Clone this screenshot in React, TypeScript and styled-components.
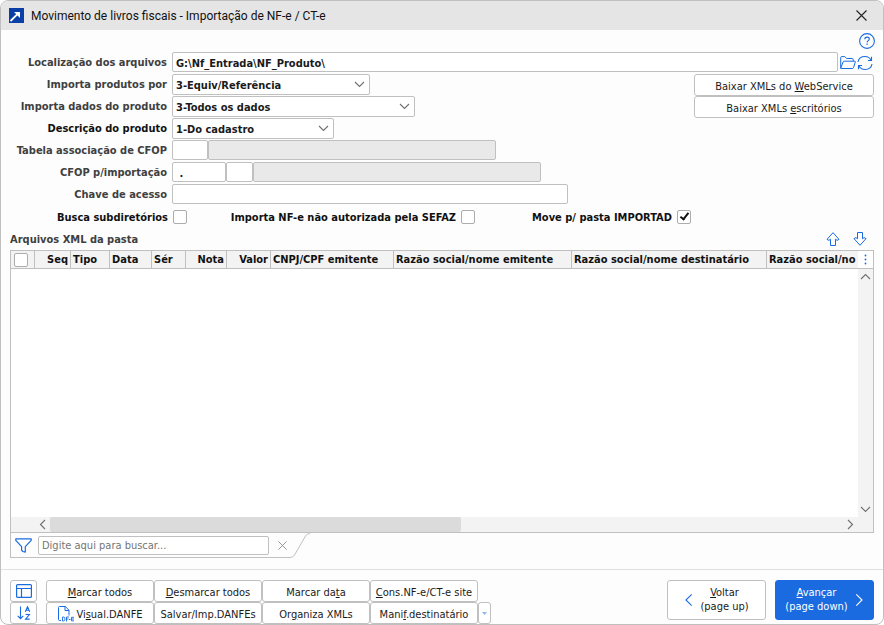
import React from "react";
import styled, { createGlobalStyle, css } from "styled-components";

const line = "#c0c0c0";
const blue = "#1a6be0";

const GlobalStyle = createGlobalStyle`
  *, *::before, *::after { box-sizing: border-box; }
  body {
    margin: 0;
    background: #ffffff;
    color: #1a1a1a;
    font-family: "DejaVu Sans Condensed", "DejaVu Sans", sans-serif;
    font-size: 11px;
    font-stretch: condensed;
  }
  button, input, select { font: inherit; color: inherit; margin: 0; }
`;

const Window = styled.main`
  display: flex;
  flex-direction: column;
  min-height: 100vh;
  border: 1px solid ${line};
  border-radius: 8px;
  background: #fdfdfd;
  overflow: hidden;
`;

const TitleBar = styled.header`
  display: flex;
  align-items: center;
  height: 29px;
  padding: 0 16px 0 8px;
  gap: 7px;
  background: #e5e5e5;
`;

const Title = styled.h1`
  flex: 1;
  margin: 0;
  font-family: Roboto, "Noto Sans", sans-serif;
  font-size: 12px;
  font-weight: 400;
  font-stretch: normal;
  color: #111111;
`;

const IconButton = styled.button`
  display: inline-flex;
  align-items: center;
  justify-content: center;
  padding: 0;
  border: 0;
  background: none;
  color: ${blue};
`;

const HelpBar = styled.div`
  display: flex;
  justify-content: flex-end;
  align-items: flex-start;
  height: 22px;
  padding: 3px 8px 0 0;
`;

const Form = styled.form`
  padding: 0 9px;
`;

const FormColumns = styled.div`
  display: flex;
  align-items: flex-start;
`;

const Fields = styled.div`
  flex: 1;
  min-width: 0;
`;

const FieldRow = styled.div`
  display: flex;
  align-items: flex-start;
  height: 22px;
`;

const FieldLabel = styled.label<{ $strong?: boolean }>`
  flex: none;
  width: 157px;
  margin-right: 5px;
  line-height: 22px;
  text-align: right;
  font-weight: 700;
  white-space: nowrap;
  color: ${(p) => (p.$strong ? "#111111" : "#404040")};
`;

const box = css`
  height: 20px;
  border: 1px solid ${line};
  border-radius: 2px;
  background: #ffffff;
  outline: 0;
`;

const TextBox = styled.input<{ $width?: number }>`
  ${box}
  ${(p) => (p.$width ? `width: ${p.$width}px;` : "flex: 1;")}
  min-width: 0;
  padding: 2px 3px 0;
  font-weight: 700;
  &:read-only { background: #e9e9e9; }
`;

const SelectWrap = styled.div<{ $width: number }>`
  position: relative;
  width: ${(p) => p.$width}px;
  svg { position: absolute; right: 5px; top: 7px; pointer-events: none; }
`;

const Select = styled.select`
  ${box}
  display: block;
  width: 100%;
  height: 21px;
  padding: 1px 3px 0;
  appearance: none;
  font-weight: 700;
`;

const RowIcons = styled.div`
  display: flex;
  align-items: center;
  gap: 1px;
  height: 22px;
  margin: 0 1px 0 2px;
`;

const PushButton = styled.button<{ $width?: number }>`
  display: flex;
  align-items: center;
  justify-content: center;
  gap: 2px;
  height: 22px;
  padding: 2px 0 0;
  ${(p) => p.$width && `width: ${p.$width}px;`}
  border: 1px solid ${line};
  border-radius: 3px;
  background: #ffffff;
  white-space: nowrap;
  u { text-underline-offset: 1px; }
`;

const ToolButton = styled(PushButton)`
  padding: 0;
  color: ${blue};
`;

const SideButtons = styled.div`
  display: flex;
  flex-direction: column;
`;

const Checks = styled.div`
  display: flex;
  height: 22px;
`;

const CheckItem = styled.div<{ $width: number }>`
  display: flex;
  align-items: center;
  justify-content: flex-end;
  gap: 5px;
  width: ${(p) => p.$width}px;
  font-weight: 700;
  white-space: nowrap;
  color: #111111;
`;

const CheckBox = styled.input.attrs({ type: "checkbox" })`
  appearance: none;
  flex: none;
  display: block;
  width: 14px;
  height: 14px;
  border: 1px solid #adadad;
  border-radius: 2px;
  background: #ffffff;
  &:checked::before {
    content: "";
    display: block;
    width: 5px;
    height: 9px;
    margin: 0 0 0 4px;
    border: solid #111111;
    border-width: 0 2px 2px 0;
    transform: rotate(38deg);
  }
`;

const ListHeading = styled.div`
  display: flex;
  align-items: center;
  justify-content: space-between;
  height: 22px;
  padding: 0 16px 0 9px;
`;

const ListTitle = styled.h2`
  margin: 0;
  font-size: 11px;
  font-weight: 700;
  color: #404040;
`;

const MoveButtons = styled.div`
  display: flex;
  gap: 13px;
`;

const Grid = styled.section`
  flex: 1;
  display: grid;
  grid-template-columns: minmax(0, 1fr) 15px;
  grid-template-rows: 18px minmax(80px, 1fr) 15px;
  margin: 0 9px;
  border: 1px solid ${line};
  background: #ffffff;
`;

const TableView = styled.div`
  grid-row: 1 / 3;
  overflow: hidden;
`;

const Table = styled.table`
  width: 100%;
  table-layout: fixed;
  border-collapse: separate;
  border-spacing: 0;
`;

const HeadCell = styled.th<{ $width?: number; $right?: boolean }>`
  ${(p) => p.$width && `width: ${p.$width}px; border-right: 1px solid ${line};`}
  height: 18px;
  padding: 0 2px;
  border-bottom: 1px solid ${line};
  background: #f3f3f3;
  line-height: 16px;
  text-align: ${(p) => (p.$right ? "right" : "left")};
  white-space: nowrap;
  color: #111111;
  ${CheckBox} { margin-left: 1px; }
`;

const ColumnMenu = styled(IconButton)`
  border-bottom: 1px solid ${line};
`;

const VScroll = styled.div`
  display: flex;
  flex-direction: column;
  align-items: center;
  justify-content: space-between;
  padding: 4px 0;
  background: #f3f3f3;
`;

const HScroll = styled.div`
  grid-column: 1 / 3;
  display: flex;
  align-items: center;
  padding: 0 19px 0 28px;
  background: #f3f3f3;
`;

const Track = styled.div`
  flex: 1;
  height: 15px;
  margin: 0 6px 0 4px;
`;

const Thumb = styled.div`
  width: 52%;
  height: 15px;
  border-radius: 2px;
  background: #dbdbdb;
`;

const Search = styled.div`
  display: flex;
  height: 25px;
  margin: 0 9px 11px;
`;

const SearchBody = styled.div`
  display: flex;
  align-items: center;
  padding: 0 3px 0 4px;
  border-left: 1px solid ${line};
  border-bottom: 1px solid ${line};
`;

const SearchBox = styled.input`
  ${box}
  width: 231px;
  height: 19px;
  margin: 0 9px 0 6px;
  padding: 0 3px;
  &::placeholder { color: #757575; opacity: 1; }
`;

const Footer = styled.footer`
  display: flex;
  align-items: flex-start;
  padding: 10px 9px 0;
  border-top: 1px solid #e0e0e0;
`;

const ToolColumn = styled.div`
  display: flex;
  flex-direction: column;
  margin-right: 9px;
`;

const Actions = styled.div`
  flex: 1;
`;

const ActionRow = styled.div`
  display: flex;
`;

const NavButton = styled.button<{ $primary?: boolean }>`
  display: flex;
  align-items: center;
  justify-content: center;
  gap: 7px;
  width: 99px;
  height: 40px;
  margin-left: 9px;
  padding: 0;
  border: 1px solid ${(p) => (p.$primary ? blue : line)};
  border-radius: 3px;
  background: ${(p) => (p.$primary ? blue : "#ffffff")};
  color: ${(p) => (p.$primary ? "#ffffff" : "#1a1a1a")};
  line-height: 14px;
  white-space: nowrap;
  u { text-underline-offset: 1px; }
`;

type Direction = "up" | "down" | "left" | "right";
const chevrons: Record<Direction, [number, number, string]> = {
  down: [11, 7, "M1 1 5.5 5.5 10 1"],
  up: [11, 7, "M1 6 5.5 1.5 10 6"],
  left: [7, 11, "M6 1 1.5 5.5 6 10"],
  right: [7, 11, "M1 1 5.5 5.5 1 10"],
};

const Chevron = ({ to, color = "#707070", scale = 1 }: { to: Direction; color?: string; scale?: number }) => {
  const [w, h, d] = chevrons[to];
  return (
    <svg width={Math.round(w * scale)} height={Math.round(h * scale)} viewBox={`0 0 ${w} ${h}`} fill="none" stroke={color} strokeWidth={1.1 / scale}>
      <path d={d} />
    </svg>
  );
};

const LogoIcon = () => (
  <svg width="15" height="15" viewBox="0 0 15 15">
    <rect width="15" height="15" fill="#0a3fa8" />
    <path d="M1.500 13 9 5.700" fill="none" stroke="#fff" strokeWidth="1.800" />
    <path d="M5 4h6v6Z" fill="#fff" />
  </svg>
);

const CloseIcon = ({ size, color }: { size: number; color: string }) => (
  <svg width={size} height={size} viewBox="0 0 11 11" stroke={color} strokeWidth="1.1">
    <path d="M.5.5l10 10M10.5.5l-10 10" />
  </svg>
);

const HelpIcon = () => (
  <svg width="16" height="16" viewBox="0 0 16 16" fill="none" stroke="currentColor" strokeWidth="1.1">
    <circle cx="8" cy="8" r="7.4" />
    <path d="M5.8 6.2c0-1.4 1-2.1 2.3-2.1s2.2.8 2.2 1.9c0 1.6-2.2 1.7-2.2 3.4M8.1 10.6v1.4" />
  </svg>
);

const FolderIcon = () => (
  <svg width="16" height="14" viewBox="0 0 16 14" fill="none" stroke="currentColor" strokeLinejoin="round">
    <path d="M.7 12.3V1.6q0-1 1-1h3.2l1.7 1.9h5.6q1 0 1 1v1.7M.7 12.3l2.4-6.4q.2-.7 1-.7h10.700q.7 0 .5.7l-1.800 5.700q-.2.9-1.200.9H1.200q-.6 0-.5-.2Z" />
  </svg>
);

const RefreshIcon = () => (
  <svg width="16" height="16" viewBox="0 0 16 16" fill="none" stroke="currentColor" strokeWidth="1.1">
    <path d="M1 7C1.600 3.500 4.500 1.500 8 1.500c2.600 0 4.800 1.300 6 3.500M14.500 1.800v3.700H11M15 9c-.6 3.500-3.500 5.500-7 5.500-2.600 0-4.800-1.300-6-3.500M1.500 14.200v-3.700H5" />
  </svg>
);

const ArrowIcon = ({ down }: { down?: boolean }) => (
  <svg width="14" height="14" viewBox="0 0 14 14" fill="none" stroke="currentColor" strokeLinejoin="round">
    <path
      d={
        down
          ? "M4.500.500h5v6.300l1.600-1.200 1.900 1L7 13.300l-6-6.700 1.900-1 1.600 1.200Z"
          : "M4.500 13.500h5V7.200l1.600 1.200 1.900-1L7 .700l-6 6.700 1.900 1 1.600-1.200Z"
      }
    />
  </svg>
);

const DotsIcon = () => (
  <svg width="3" height="11" viewBox="0 0 3 11" fill="currentColor">
    <circle cx="1.500" cy="1.500" r=".9" />
    <circle cx="1.500" cy="5.500" r=".9" />
    <circle cx="1.500" cy="9.500" r=".9" />
  </svg>
);

const FunnelIcon = () => (
  <svg width="17" height="15" viewBox="0 0 17 15" fill="none" stroke={blue} strokeWidth="1.200" strokeLinejoin="round">
    <path d="M.800.800h15.400v1.600L10.300 8.600v5.500l-2.400-.6-1.300-1.200V8.600L.800 2.400Z" />
  </svg>
);

const LayoutIcon = () => (
  <svg width="16" height="14" viewBox="0 0 16 14" fill="none" stroke="currentColor" strokeWidth="1.200">
    <rect x=".600" y=".600" width="14.800" height="12.800" rx="1" />
    <path d="M.600 4.500h14.800M5.500 4.500v8.900" />
  </svg>
);

const SortIcon = () => (
  <svg width="14" height="14" viewBox="0 0 14 14" fill="none" stroke="currentColor" strokeWidth="1.100">
    <path d="M3.500.500v12M.700 9.800l2.800 2.800 2.800-2.800M8.300 5.700 10.500.700l2.200 5M9 4.200h3M8.600 8.500h3.800l-3.900 4.600h4.200" />
  </svg>
);

const DocIcon = () => (
  <svg width="17" height="16" viewBox="0 0 17 16" fill="none" stroke={blue}>
    <path d="M4 14.500H2.500q-1 0-1-1v-12q0-1 1-1h5.800l3.700 3.700v5.300M8 .700v3.800h4" />
    <path d="M5.500 11v4M5.500 11h1q1.500 0 1.500 2t-1.500 2h-1M9.500 15.500V11H12M9.500 13h2M12 13.500h1.500M17 11.300h-2.500v3.500H17M14.500 13H17" strokeWidth=".9" />
  </svg>
);

const SlantEdge = () => (
  <svg width="20" height="25" viewBox="0 0 20 25" fill="none" stroke={line}>
    <path d="M0 24.500Q3 24.500 4.500 22L15.500 3Q17 .500 20 .500" />
  </svg>
);

const DropdownIcon = () => (
  <svg width="5" height="3" viewBox="0 0 5 3" fill="#8db8f5">
    <path d="M0 0h5L2.500 3Z" />
  </svg>
);

const columns: { name: string; width?: number; right?: boolean }[] = [
  { name: "Seq", width: 36, right: true },
  { name: "Tipo", width: 39 },
  { name: "Data", width: 42 },
  { name: "Sér", width: 34 },
  { name: "Nota", width: 41, right: true },
  { name: "Valor", width: 44, right: true },
  { name: "CNPJ/CPF emitente", width: 123 },
  { name: "Razão social/nome emitente", width: 178 },
  { name: "Razão social/nome destinatário", width: 195 },
  { name: "Razão social/no" },
];

const SelectField = ({ id, label, value, width, strong }: { id: string; label: string; value: string; width: number; strong?: boolean }) => (
  <FieldRow>
    <FieldLabel htmlFor={id} $strong={strong}>{label}</FieldLabel>
    <SelectWrap $width={width}>
      <Select id={id}>
        <option>{value}</option>
      </Select>
      <Chevron to="down" />
    </SelectWrap>
  </FieldRow>
);

export default function App() {
  return (
    <>
      <GlobalStyle />
      <Window>
        <TitleBar>
          <LogoIcon />
          <Title>Movimento de livros fiscais - Importação de NF-e / CT-e</Title>
          <IconButton aria-label="Fechar"><CloseIcon size={11} color="#222" /></IconButton>
        </TitleBar>
        <HelpBar>
          <IconButton aria-label="Ajuda"><HelpIcon /></IconButton>
        </HelpBar>
        <Form onSubmit={(e) => e.preventDefault()}>
          <FieldRow>
            <FieldLabel htmlFor="path">Localização dos arquivos</FieldLabel>
            <TextBox id="path" defaultValue={"G:\\Nf_Entrada\\NF_Produto\\"} />
            <RowIcons>
              <IconButton type="button" aria-label="Abrir pasta"><FolderIcon /></IconButton>
              <IconButton type="button" aria-label="Atualizar"><RefreshIcon /></IconButton>
            </RowIcons>
          </FieldRow>
          <FormColumns>
            <Fields>
              <SelectField id="by" label="Importa produtos por" value="3-Equiv/Referência" width={198} />
              <SelectField id="data" label="Importa dados do produto" value="3-Todos os dados" width={243} />
              <SelectField id="desc" label="Descrição do produto" value="1-Do cadastro" width={162} strong />
              <FieldRow>
                <FieldLabel htmlFor="table">Tabela associação de CFOP</FieldLabel>
                <TextBox id="table" $width={36} />
                <TextBox aria-label="Descrição da tabela" $width={288} readOnly />
              </FieldRow>
              <FieldRow>
                <FieldLabel htmlFor="cfop">CFOP p/importação</FieldLabel>
                <TextBox id="cfop" $width={54} defaultValue=" ." />
                <TextBox aria-label="Complemento do CFOP" $width={27} />
                <TextBox aria-label="Descrição do CFOP" $width={288} readOnly />
              </FieldRow>
              <FieldRow>
                <FieldLabel htmlFor="key">Chave de acesso</FieldLabel>
                <TextBox id="key" $width={396} />
              </FieldRow>
            </Fields>
            <SideButtons>
              <PushButton type="button" $width={180}><span>Baixar XMLs do <u>W</u>ebService</span></PushButton>
              <PushButton type="button" $width={180}><span>Baixar XMLs <u>e</u>scritórios</span></PushButton>
            </SideButtons>
          </FormColumns>
          <Checks>
            <CheckItem $width={177}>
              <label htmlFor="sub">Busca subdiretórios</label>
              <CheckBox id="sub" />
            </CheckItem>
            <CheckItem $width={288}>
              <label htmlFor="sefaz">Importa NF-e não autorizada pela SEFAZ</label>
              <CheckBox id="sefaz" />
            </CheckItem>
            <CheckItem $width={216}>
              <label htmlFor="move">Move p/ pasta IMPORTAD</label>
              <CheckBox id="move" defaultChecked />
            </CheckItem>
          </Checks>
        </Form>
        <ListHeading>
          <ListTitle>Arquivos XML da pasta</ListTitle>
          <MoveButtons>
            <IconButton aria-label="Mover para cima"><ArrowIcon /></IconButton>
            <IconButton aria-label="Mover para baixo"><ArrowIcon down /></IconButton>
          </MoveButtons>
        </ListHeading>
        <Grid>
          <TableView>
            <Table>
              <thead>
                <tr>
                  <HeadCell $width={24}><CheckBox aria-label="Selecionar todos" /></HeadCell>
                  {columns.map((c, i) => (
                    <HeadCell key={i} $width={c.width} $right={c.right}>{c.name}</HeadCell>
                  ))}
                </tr>
              </thead>
            </Table>
          </TableView>
          <ColumnMenu aria-label="Colunas"><DotsIcon /></ColumnMenu>
          <VScroll>
            <Chevron to="up" />
            <Chevron to="down" />
          </VScroll>
          <HScroll>
            <Chevron to="left" />
            <Track><Thumb /></Track>
            <Chevron to="right" />
          </HScroll>
        </Grid>
        <Search>
          <SearchBody>
            <FunnelIcon />
            <SearchBox aria-label="Buscar" placeholder="Digite aqui para buscar..." />
            <IconButton aria-label="Limpar busca"><CloseIcon size={9} color="#8a8a8a" /></IconButton>
          </SearchBody>
          <SlantEdge />
        </Search>
        <Footer>
          <ToolColumn>
            <ToolButton $width={27} aria-label="Layout"><LayoutIcon /></ToolButton>
            <ToolButton $width={27} aria-label="Ordenar"><SortIcon /></ToolButton>
          </ToolColumn>
          <Actions>
            <ActionRow>
              <PushButton $width={108}><span><u>M</u>arcar todos</span></PushButton>
              <PushButton $width={108}><span><u>D</u>esmarcar todos</span></PushButton>
              <PushButton $width={108}><span>Marcar da<u>t</u>a</span></PushButton>
              <PushButton $width={108}><span><u>C</u>ons.NF-e/CT-e site</span></PushButton>
            </ActionRow>
            <ActionRow>
              <PushButton $width={108}><DocIcon /><span>Vi<u>s</u>ual.DANFE</span></PushButton>
              <PushButton $width={108}><span>Salvar/Imp.DANFEs</span></PushButton>
              <PushButton $width={108}><span>Or<u>g</u>aniza XMLs</span></PushButton>
              <PushButton $width={108}><span>Mani<u>f</u>.destinatário</span></PushButton>
              <ToolButton $width={13} aria-label="Mais opções"><DropdownIcon /></ToolButton>
            </ActionRow>
          </Actions>
          <NavButton>
            <Chevron to="left" color={blue} scale={1.3} />
            <span><u>V</u>oltar<br />(page up)</span>
          </NavButton>
          <NavButton $primary>
            <span><u>A</u>vançar<br />(page down)</span>
            <Chevron to="right" color="#ffffff" scale={1.3} />
          </NavButton>
        </Footer>
      </Window>
    </>
  );
}
